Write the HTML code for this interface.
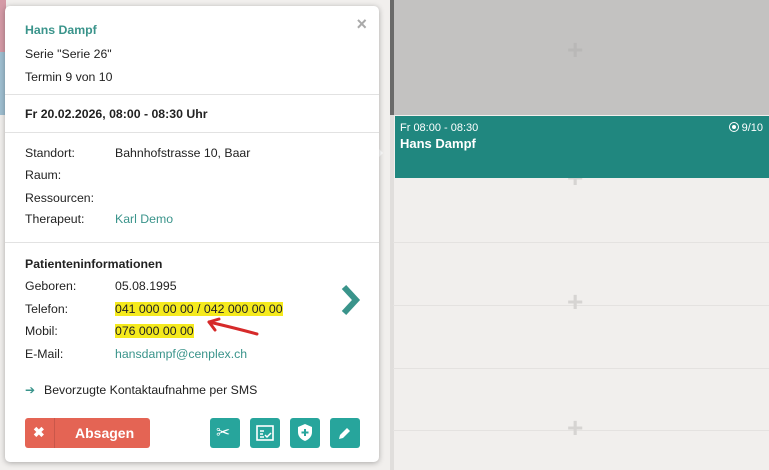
<!DOCTYPE html><html><head><style>
body{margin:0;width:769px;height:470px;overflow:hidden;position:relative;background:#f1efed;font-family:"Liberation Sans",sans-serif;font-size:12.3px;color:#222}
.a{position:absolute}
.pop{left:5px;top:6px;width:374px;height:456px;background:#fff;border-radius:5px;box-shadow:0 1px 6px rgba(0,0,0,.3)}
.t{position:absolute;left:20px;white-space:nowrap}
.v{position:absolute;left:110px;white-space:nowrap}
.hr{position:absolute;left:0;width:374px;height:1px;background:#e2e2e2}
.g{color:#3a948b}
.hl{background:#f5ea1c}
.btn{position:absolute;top:412px;width:30px;height:30px;background:#27a59c;border-radius:3px}
.plus{position:absolute;color:#d6d4d2;font-size:28px;font-weight:bold}
.line{position:absolute;left:393px;width:376px;height:1px;background:#e4e2e0}
</style></head><body>
<div class="a" style="left:0;top:0;width:6px;height:52px;background:#d49aa6"></div>
<div class="a" style="left:0;top:52px;width:6px;height:63px;background:#9fbfd1"></div>
<div class="a" style="left:390px;top:0;width:4px;height:470px;background:#e0dedc"></div>
<div class="a" style="left:390px;top:0;width:4px;height:115px;background:#6a6a6a"></div>
<div class="a" style="left:394px;top:0;width:375px;height:115px;background:#c3c2c1"></div>
<div class="line" style="top:242px"></div><div class="line" style="top:305px"></div><div class="line" style="top:368px"></div><div class="line" style="top:430px"></div>
<div class="plus" style="left:567px;top:34px;color:#b9b8b7">+</div>
<div class="plus" style="left:567px;top:162px">+</div>
<div class="plus" style="left:567px;top:286px">+</div>
<div class="plus" style="left:567px;top:412px">+</div>
<div class="a" style="left:395px;top:116px;width:374px;height:62px;background:#20877f;color:#fff">
<div class="a" style="left:5px;top:6px;font-size:11px">Fr 08:00 - 08:30</div>
<div class="a" style="left:5px;top:20px;font-size:13px;font-weight:bold">Hans Dampf</div>
<div class="a" style="right:6px;top:6px;font-size:11px"><span style="display:inline-block;width:8px;height:8px;border:1.5px solid #fff;border-radius:50%;vertical-align:-1px;position:relative"><span style="position:absolute;left:2px;top:2px;width:4px;height:4px;background:#fff;border-radius:50%"></span></span> 9/10</div>
</div>
<div class="a" style="left:376px;top:146px;width:0;height:0;border:7px solid transparent;border-left-color:#fff"></div>
<div class="a pop">
<div class="a" style="right:12px;top:8px;color:#aaa;font-size:18px;font-weight:bold">×</div>
<div class="t g" style="top:17px;font-weight:bold">Hans Dampf</div>
<div class="t" style="top:41px">Serie "Serie 26"</div>
<div class="t" style="top:64px">Termin 9 von 10</div>
<div class="hr" style="top:88px"></div>
<div class="t" style="top:101px;font-weight:bold">Fr 20.02.2026, 08:00 - 08:30 Uhr</div>
<div class="hr" style="top:126px"></div>
<div class="t" style="top:140px">Standort:</div><div class="v" style="top:140px">Bahnhofstrasse 10, Baar</div>
<div class="t" style="top:162px">Raum:</div>
<div class="t" style="top:185px">Ressourcen:</div>
<div class="t" style="top:206px">Therapeut:</div><div class="v g" style="top:206px">Karl Demo</div>
<div class="hr" style="top:236px"></div>
<div class="t" style="top:251px;font-weight:bold">Patienteninformationen</div>
<div class="t" style="top:273px">Geboren:</div><div class="v" style="top:273px">05.08.1995</div>
<div class="t" style="top:296px">Telefon:</div><div class="v" style="top:296px"><span class="hl">041 000 00 00 / 042 000 00 00</span></div>
<div class="t" style="top:318px">Mobil:</div><div class="v" style="top:318px"><span class="hl">076 000 00 00</span></div>
<div class="t" style="top:341px">E-Mail:</div><div class="v g" style="top:341px">hansdampf@cenplex.ch</div>
<svg class="a" style="left:200px;top:310px" width="60" height="22"><path d="M4 6 Q30 12 52 18" stroke="#d62a2a" stroke-width="3" fill="none" stroke-linecap="round"/><path d="M4 6 L14 3 M4 6 L10 14" stroke="#d62a2a" stroke-width="3" fill="none" stroke-linecap="round"/></svg>
<svg class="a" style="left:335px;top:278px" width="22" height="32"><path d="M4 3 L16 16 L4 29" stroke="#3a948b" stroke-width="6" fill="none"/></svg>
<div class="t g" style="top:377px;font-size:12px">➔</div>
<div class="t" style="left:39px;top:377px">Bevorzugte Kontaktaufnahme per SMS</div>
<div class="a" style="left:20px;top:412px;width:125px;height:30px;background:#e46454;border-radius:3px;color:#fff;font-weight:bold">
<div class="a" style="left:8px;top:6px;font-size:14px">✖</div>
<div class="a" style="left:29px;top:0;width:1px;height:30px;background:#c9574a"></div>
<div class="a" style="left:50px;top:7px;font-size:14px">Absagen</div></div>
<div class="btn" style="left:205px"><div class="a" style="left:6px;top:5px;color:#fff;font-size:17px">✂</div></div>
<div class="btn" style="left:245px"><svg class="a" style="left:6px;top:6px" width="18" height="18"><rect x="1" y="2" width="16" height="14" fill="none" stroke="#fff" stroke-width="1.6"/><path d="M4 7h4M4 10h3M4 13h4M9 11l2 2 4-4" stroke="#fff" stroke-width="1.5" fill="none"/></svg></div>
<div class="btn" style="left:285px"><svg class="a" style="left:7px;top:5px" width="16" height="19"><path d="M8 1 L15 4 V9 Q15 15 8 18 Q1 15 1 9 V4Z" fill="#fff"/><path d="M8 6v7M4.5 9.5h7" stroke="#27a59c" stroke-width="2"/></svg></div>
<div class="btn" style="left:325px"><svg class="a" style="left:7px;top:7px" width="16" height="16"><path d="M3 10 L10 3 L13 6 L6 13 L2 14Z" fill="#fff"/></svg></div>
</div>
</body></html>
